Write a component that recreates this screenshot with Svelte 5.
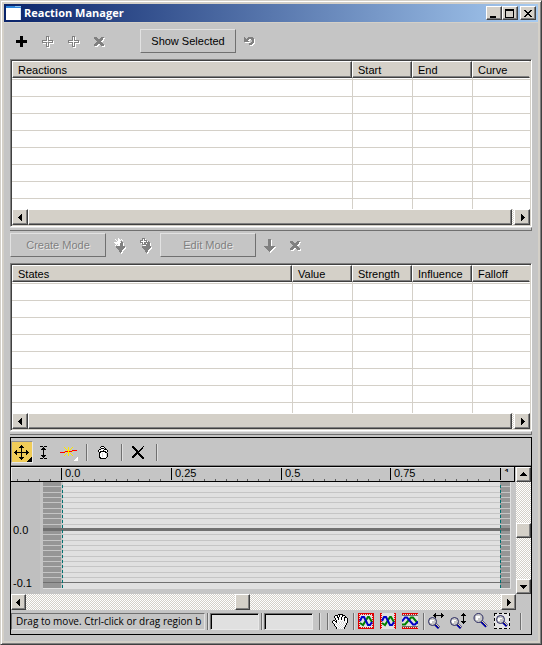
<script>
  const palette = { k: '#000', g: '#808080', w: '#fff', l: '#d8d8d8' };

  const plus = ['....kkk....', '....kkk....', '....kkk....', '....kkk....', 'kkkkkkkkkkk', 'kkkkkkkkkkk', 'kkkkkkkkkkk', '....kkk....', '....kkk....', '....kkk....', '....kkk....'];
  const plusOutline = ['....ggg....', '....g.g....', '....g.g....', '....g.g....', 'ggggg.ggggg', 'g.........g', 'ggggg.ggggg', '....g.g....', '....g.g....', '....g.g....', '....ggg....'];
  const plusFilled = plusOutline.map((row, i) =>
    i > 0 && i < 10 ? row.replace('g.g', 'gwg').replace('g.........g', 'gwwwwwwwwwg') : row
  );
  const cross = ['ggg....ggg', 'gggg..ggg.', '.gggggggg.', '..gggggg..', '...gggg...', '..gggggg..', '.gggggggg.', 'gggg..gggg', 'ggg....ggg'];
  const undo = ['g...ggggg.', 'gg.ggggggg', 'ggggg..ggg', 'gggg....gg', 'ggggg...gg', '.......ggg', '.....gggg.', '.....ggg..'];
  const down = ['....ggg....', '....ggg....', '....ggg....', '....ggg....', '....ggg....', '....ggg....', '....ggg....', 'ggggggggggg', '.ggggggggg.', '..ggggggg..', '...ggggg...', '....ggg....', '.....g.....'];
  const downStar = ['....w......', '.w..w..w...', '..w.w.w....', '...www.g...', 'wwwwwwwgg..', '...wwwggg..', '..w.w.ggg..', '.w..w.ggg..', '..ggggggggg', '..ggggggggg', '...ggggggg.', '....ggggg..', '.....ggg...', '.....ggg...', '......g....'];
  const downPlus = ['..ggg......', '..gwg......', 'gggwggg....', 'gwwwwwg.g..', 'gggwgggggg.', '..gwggwggg.', '..gggggggg.', '......gggg.', '..ggggggggg', '..ggggggggg', '...ggggggg.', '....ggggg..', '.....ggg...', '.....ggg...', '......g....'];
  const trash = ['...kkk....', '..kwwwk...', '...kkk.k..', '.kkwwwkkk.', 'kwwwwkwwwk', 'kwkkkkkkwk', '.kkwwwwkk.', '.kwwlwwwlk', '.kwwlwwwlk', '.kwwlwwwlk', '.kwwlwwwlk', '.kkwwwwwk.', '..kkkkkk..'];
  const bigCross = ['kk.........k.', 'kkk.......k..', '.kkk.....kk..', '..kkk...kk...', '...kkk.kk....', '....kkkk.....', '....kkk......', '...kkkkk.....', '..kkk.kkk....', '.kkk...kkk...', 'kkk.....kkk..', 'kk.......kkk.', '..........kk.'];
  const hand = ['......kkkkk.....', '...kkkwkwwkkk...', '..kwwkwkwwkwwk..', '..kwwkkwwkwwkkk.', '...kwwkwwkwwkwwk', '...kwwkwwkwwkwwk', '.kkwkwwwwwwwkwwk', 'kwwkkwlwlwlwlwwk', 'kwwwkwwlwlwlwlwk', '.kwlwlwlwlwlwlk.', '..kwlwlwlwlwlwk.', '..kwwlwlwlwlwk..', '...kwwlwlwlwlk..', '....kwwlwlwlk...', '....kwlwlwlwk...'];
  const ibeam = ['kkk.kkk', '...k...', '..kkk..', '.kkkkk.', '...k...', '...k...', '...k...', '...k...', '...k...', '.kkkkk.', '..kkk..', '...k...', 'kkk.kkk'];

  const reactionCols = ['Reactions', 'Start', 'End', 'Curve'];
  const stateCols = ['States', 'Value', 'Strength', 'Influence', 'Falloff'];

  const majors = [
    { x: 50, label: '0.0' },
    { x: 160, label: '0.25' },
    { x: 270, label: '0.5' },
    { x: 379, label: '0.75' },
    { x: 489, label: '1' }
  ];
  const minors = Array.from({ length: 44 }, (_, i) => i - 4)
    .filter((k) => k % 10 !== 0 && k < 40)
    .map((k) => Math.round(50 + 10.97 * k));
  const lines = Array.from({ length: 19 }, (_, i) => i - 8)
    .filter((k) => k !== 0)
    .map((k) => ({ y: Math.round(47 + 5.33 * k), dark: k === 10 }));
</script>

{#snippet pix(rows, emboss = false)}
  <svg class:emboss width={rows[0].length} height={rows.length} shape-rendering="crispEdges" aria-hidden="true">
    {#each rows as row, y}
      {#each row as c, x}
        {#if c !== '.'}<rect {x} {y} width="1" height="1" fill={palette[c]} />{/if}
      {/each}
    {/each}
  </svg>
{/snippet}

{#snippet arrow(dir)}
  <svg width="7" height="7" shape-rendering="crispEdges" aria-hidden="true">
    {#if dir === 'left'}<path d="M5 0v7h-1v-1h-1v-1h-1v-1h-1v-1h1v-1h1v-1h1v-1z" />
    {:else if dir === 'right'}<path d="M2 0v7h1v-1h1v-1h1v-1h1v-1h-1v-1h-1v-1h-1v-1z" />
    {:else if dir === 'up'}<path d="M0 5h7v-1h-1v-1h-1v-1h-1v-1h-1v1h-1v1h-1v1h-1z" />
    {:else}<path d="M0 2h7v1h-1v1h-1v1h-1v1h-1v-1h-1v-1h-1v-1h-1z" />{/if}
  </svg>
{/snippet}

{#snippet list(cols, label)}
  <section class="list" aria-label={label}>
    <div class="rows">
      <table>
        <colgroup>
          {#each cols as _, i}<col class:mid={i > 0 && i < cols.length - 1} class:last={i === cols.length - 1} />{/each}
        </colgroup>
        <thead><tr>{#each cols as c}<th scope="col">{c}</th>{/each}</tr></thead>
        <tbody>
          <tr class="lead">{#each cols as _}<td></td>{/each}</tr>
          {#each Array(8) as _}<tr>{#each cols as _}<td></td>{/each}</tr>{/each}
        </tbody>
      </table>
    </div>
    <div class="scroll">
      <button class="raised arrow" aria-label="Scroll left">{@render arrow('left')}</button>
      <div class="raised thumb"></div>
      <div class="stub"></div>
      <button class="raised arrow" aria-label="Scroll right">{@render arrow('right')}</button>
    </div>
  </section>
{/snippet}

{#snippet curves(kind)}
  <svg width="16" height="16" aria-hidden="true">
    <rect width="16" height="16" fill="#e0e0e0" />
    <g shape-rendering="crispEdges" fill="#e00000">
      {#if kind !== 'v'}<path d="M0 0h16v1h-16zM0 15h16v1h-16z" /><path d="M0 1.500h16M0 14.500h16" stroke="#e00000" stroke-dasharray="1 1" />{/if}
      {#if kind === 'h'}<path d="M0 2h16v1h-16zM0 13h16v1h-16z" fill="#707070" />{/if}
      {#if kind !== 'h'}<path d="M0 0h1v16h-1zM15 0h1v16h-1z" /><path d="M1.500 0v16M14.500 0v16" stroke="#e00000" stroke-dasharray="1 1" />{/if}
    </g>
    <g fill="none" stroke-width="2">
      {#if kind === 'h'}
        <path d="M0 11.500h3l6-7h2l5 6" stroke="#008000" />
        <path d="M0 8.500l3-4h2l6 7h2l3-3" stroke="#0000c8" />
      {:else}
        <path d="M2 10l3 2 5-8h1l3 5" stroke="#008000" />
        <path d="M2 8l2-4h2l4 8h2l2-3" stroke="#0000c8" />
      {/if}
    </g>
  </svg>
{/snippet}

{#snippet lens(kind)}
  <svg width="18" height="16" aria-hidden="true">
    {#if kind === 'region'}
      <rect x="1" width="16" height="16" fill="#e4e4e4" />
      <path d="M1 .500h16M1 15.500h16M1.500 0v16M16.500 0v16" stroke="#000" stroke-dasharray="3 2" />
    {/if}
    <g transform={kind === 'plain' ? 'translate(2 0)' : kind === 'region' ? 'translate(3 2)' : 'translate(1 4)'}>
      {#if kind === 'plain'}
        <path d="M8 8l5.500 5.500" stroke="#0000a0" stroke-width="3" />
        <path d="M9 8l5 5" stroke="#f0e080" />
        <circle cx="5.500" cy="5" r="4.500" fill="#c8c8c8" stroke="#282860" />
        <path d="M3 3h4v2h-2v2h-2z" fill="#fff" />
      {:else}
        <path d="M6.500 6.500l4.500 4.500" stroke="#0000a0" stroke-width="3" />
        <path d="M7.500 6.500l4 4" stroke="#f0e080" />
        <circle cx="4.500" cy="4.500" r="4" fill="#c8c8c8" stroke="#282860" />
        <path d="M2 3h4v1h-2v2h-2z" fill="#fff" />
      {/if}
    </g>
    <g shape-rendering="crispEdges">
      {#if kind === 'h'}
        <path d="M6 2h11v1h-11zM8 0h1v5h-1zM7 1h1v3h-1zM14 0h1v5h-1zM15 1h1v3h-1z" />
      {:else if kind === 'v'}
        <path d="M14 0h1v11h-1zM12 2h5v1h-5zM13 1h3v1h-3zM12 8h5v1h-5zM13 9h3v1h-3z" />
      {/if}
    </g>
  </svg>
{/snippet}

<main>
  <header>
    <svg width="16" height="14" shape-rendering="crispEdges" aria-hidden="true">
      <path d="M0 0h15v14h-15z" fill="#fff" /><path d="M0 0h15v2h-15z" fill="#2d86dd" /><path d="M9 0h6v1h-6z" fill="#8dc6f4" /><path d="M14 2h1v12h-1z" fill="#d9e6f4" />
    </svg>
    <h1>Reaction Manager</h1>
    <button class="raised win" aria-label="Minimize"><svg width="10" height="10"><path d="M1 7h6v2h-6z" /></svg></button>
    <button class="raised win" aria-label="Maximize"><svg width="10" height="10" shape-rendering="crispEdges"><path d="M0 0h9v9h-9zM1 2v6h7v-6z" fill-rule="evenodd" /></svg></button>
    <button class="raised win close" aria-label="Close"><svg width="10" height="10" shape-rendering="crispEdges"><path d="M1 1h2v1h1v1h2v-1h1v-1h2v1h-1v1h-1v1h-1v1h1v1h1v1h1v1h-2v-1h-1v-1h-2v1h-1v1h-2v-1h1v-1h1v-1h1v-1h-1v-1h-1v-1h-1z" /></svg></button>
  </header>

  <div class="client">
    <div class="bar top">
      <button class="tool" aria-label="Add master">{@render pix(plus)}</button>
      <button class="tool" aria-label="Add slaves" disabled>{@render pix(plusOutline, true)}</button>
      <button class="tool" aria-label="Add selected" disabled>{@render pix(plusFilled, true)}</button>
      <button class="tool" aria-label="Delete reaction" disabled>{@render pix(cross, true)}</button>
      <button class="text show">Show Selected</button>
      <button class="tool" aria-label="Refresh" disabled>{@render pix(undo, true)}</button>
    </div>

    {@render list(reactionCols, 'Reactions')}
    <div class="splitter"></div>

    <div class="bar modes">
      <button class="text" disabled>Create Mode</button>
      <button class="tool" aria-label="New state" disabled>{@render pix(downStar, true)}</button>
      <button class="tool" aria-label="Append state" disabled>{@render pix(downPlus, true)}</button>
      <button class="text" disabled>Edit Mode</button>
      <button class="tool" aria-label="Set state" disabled>{@render pix(down, true)}</button>
      <button class="tool" aria-label="Delete state" disabled>{@render pix(cross, true)}</button>
    </div>

    {@render list(stateCols, 'States')}
    <div class="splitter"></div>

    <section class="panel" aria-label="Curve editor">
      <div class="curvebar">
        <button class="tool active" aria-label="Move points">
          <svg width="20" height="20" shape-rendering="crispEdges">
            <path d="M9 3h1v15h-1zM2 10h15v1h-15zM8 4h3v1h-3zM7 5h5v1h-5zM8 16h3v1h-3zM7 15h5v1h-5zM3 9h1v3h-1zM4 8h1v5h-1zM15 9h1v3h-1zM14 8h1v5h-1zM20 15v5h-5v-1h1v-1h1v-1h1v-1h1v-1z" />
          </svg>
        </button>
        <button class="tool scale" aria-label="Scale points">{@render pix(ibeam)}</button>
        <button class="tool spark" aria-label="Insert point">
          <svg width="19" height="16" shape-rendering="crispEdges">
            <path d="M4 1h1v1h1v1h1v1h1v-3h1v3h1v-1h1v-1h1v-1h1v1h-1v1h-1v1h-1v1h3v1h-3v1h1v1h1v1h1v1h-1v-1h-1v-1h-1v-1h-1v3h-1v-3h-1v1h-1v1h-1v1h-1v-1h1v-1h1v-1h1v-1h-3v-1h3v-1h-1v-1h-1v-1h-1z" fill="#ffe800" />
            <path d="M0 6h5v-1h3v1h-3v1h-5zM9 5h3v-1h5v1h-5v1h-3z" fill="#f00" />
            <path d="M18 11v4h-4v-1h1v-1h1v-1h1v-1z" fill="#fff" />
          </svg>
        </button>
        <i class="sep"></i>
        <button class="tool" aria-label="Clear">{@render pix(trash)}</button>
        <i class="sep"></i>
        <button class="tool" aria-label="Delete points">{@render pix(bigCross)}</button>
        <i class="sep"></i>
      </div>

      <div class="view">
        <div class="plane">
          <div class="ruler">
            {#each minors as x}<i class="minor" style="left:{x}px"></i>{/each}
            {#each majors as m}<span class="major" style="left:{m.x}px"><b>{m.label}</b></span>{/each}
          </div>
          <div class="graph">
            <div class="axis"><span>0.0</span><span>-0.1</span></div>
            <svg class="plot" height="107" viewBox="0 0 468 107" preserveAspectRatio="none" shape-rendering="crispEdges" aria-label="Curve graph">
              <rect width="468" height="107" fill="#e0e0e0" />
              <rect width="18" height="106" fill="#969696" /><rect x="18" width="2" height="106" fill="#c5c5c5" />
              <rect x="457" width="10" height="106" fill="#969696" />
              {#each lines as l}<rect y={l.y} width="467" height="1" fill={l.dark ? '#707070' : '#c5c5c5'} />{/each}
              <rect y="46" width="467" height="3" fill="#707070" />
              <path d="M19.500 3v103M457.500 3v103" stroke="#007070" stroke-dasharray="3 2" />
            </svg>
          </div>
        </div>
        <div class="vscroll dither">
          <button class="raised arrow" aria-label="Scroll up">{@render arrow('up')}</button>
          <div class="track"></div>
          <div class="raised knob"></div>
          <div class="track"></div>
          <button class="raised arrow" aria-label="Scroll down">{@render arrow('down')}</button>
        </div>
      </div>

      <div class="hrow">
        <div class="hscroll dither">
          <button class="raised arrow" aria-label="Scroll left">{@render arrow('left')}</button>
          <div class="before"></div>
          <div class="raised knob"></div>
          <div class="after"></div>
          <button class="raised arrow" aria-label="Scroll right">{@render arrow('right')}</button>
        </div>
      </div>

      <div class="status">
        <span class="hint">Drag to move. Ctrl-click or drag region b</span>
        <i class="sep"></i>
        <input aria-label="Horizontal value" />
        <i class="sep"></i>
        <input aria-label="Vertical value" />
        <i class="sep first"></i>
        <i class="sep second"></i>
        <button class="tool" aria-label="Pan">{@render pix(hand)}</button>
        <i class="sep"></i>
        <button class="tool" aria-label="Zoom extents">{@render curves('all')}</button>
        <button class="tool" aria-label="Zoom horizontal extents">{@render curves('v')}</button>
        <button class="tool" aria-label="Zoom value extents">{@render curves('h')}</button>
        <i class="sep"></i>
        <button class="tool" aria-label="Zoom horizontally">{@render lens('h')}</button>
        <button class="tool" aria-label="Zoom vertically">{@render lens('v')}</button>
        <button class="tool" aria-label="Zoom">{@render lens('plain')}</button>
        <button class="tool" aria-label="Zoom region">{@render lens('region')}</button>
        <i class="sep end"></i>
      </div>
    </section>
  </div>
</main>

<style>
  :global(body) { margin: 0; background: #d4d0c8; }
  * { box-sizing: border-box; }
  main {
    border: 1px solid;
    border-color: #d4d0c8 #404040 #404040 #d4d0c8;
    box-shadow: inset 1px 1px #fff, inset -1px -1px #808080;
    background: #d4d0c8;
    padding: 3px;
    font: 11px/14px "Liberation Sans", Arial, sans-serif;
    color: #000;
  }
  svg { display: block; flex: none; }
  button { font: inherit; color: inherit; padding: 0; margin: 0; border: 0; background: none; flex: none; }
  .raised {
    background: #d4d0c8;
    border: 1px solid;
    border-color: #fff #404040 #404040 #fff;
    box-shadow: inset -1px -1px #808080;
  }
  header {
    display: flex;
    align-items: center;
    height: 18px;
    padding: 0 2px;
    background: linear-gradient(90deg, #0a246a, #a6caf0);
  }
  h1 { flex: 1; margin: 0 0 0 2px; font: bold 11px/16px "Open Sans", "Noto Sans", sans-serif; color: #fff; }
  .win { width: 16px; height: 14px; padding: 1px 0 0 2px; }
  .close { margin-left: 2px; }
  .client { margin-top: 1px; padding: 0 6px 6px; background: #c5c5c5; }

  .bar { display: flex; align-items: center; }
  .top { height: 36px; }
  .modes { height: 32px; padding-bottom: 4px; }
  .tool { display: flex; align-items: center; justify-content: center; width: 26px; height: 24px; }
  .top .tool { padding-right: 4px; }
  .modes .tool { padding-right: 2px; }
  .emboss { filter: drop-shadow(1px 1px 0 #fff); overflow: visible; }
  .text {
    width: 96px;
    height: 24px;
    border: 1px solid;
    border-color: #e2e2e2 #707070 #707070 #e2e2e2;
  }
  .text:disabled { color: #808080; text-shadow: 1px 1px #e8e8e8; }
  .modes .text + .tool { margin-left: 1px; }
  .modes .tool + .text { margin-left: 1px; }
  .show { margin: 0 2px 0 26px; }

  .list {
    border: 1px solid;
    border-color: #808080 #fff #fff #808080;
    box-shadow: inset 1px 1px #404040, inset -1px -1px #d4d0c8;
    padding: 1px;
    background: #fff;
  }
  .rows { height: 148px; overflow: hidden; }
  table { width: 100%; table-layout: fixed; border-collapse: separate; border-spacing: 0; background: #fff; }
  .mid { width: 60px; }
  .last { width: 58px; }
  th {
    height: 17px;
    padding: 1px 0 0 5px;
    text-align: left;
    font-weight: normal;
    line-height: 13px;
    background: #d4d0c8;
    border: 1px solid;
    border-color: #fff #404040 #404040 #fff;
    box-shadow: inset -1px -1px #808080;
  }
  th:last-child { border-right-color: #d4d0c8; box-shadow: inset 0 -1px #808080; }
  td { height: 17px; padding: 0; border-bottom: 1px solid #d4d0c8; border-left: 1px solid #d4d0c8; }
  td:first-child { border-left: 0; }
  .lead td { height: 2px; }
  .scroll { display: flex; height: 16px; }
  .arrow { display: flex; align-items: center; justify-content: center; width: 16px; height: 16px; }
  .thumb { flex: 1; height: 16px; }
  .stub, .dither {
    background: repeating-conic-gradient(#fff 0 25%, #d4d0c8 0 50%) 0 0 / 2px 2px;
  }
  .stub { width: 2px; }
  .splitter { height: 4px; border-top: 1px solid #e2e2e2; border-bottom: 1px solid #707070; border-right: 1px solid #707070; }

  .panel { margin-top: 2px; border: 1px solid #000; }
  .curvebar {
    display: flex;
    align-items: center;
    height: 29px;
    border-bottom: 1px solid #000;
    box-shadow: inset 0 -1px #808080;
  }
  .curvebar .tool { width: 24px; padding-right: 2px; }
  .curvebar .active {
    width: 22px;
    height: 22px;
    padding: 0;
    background: #f0cc58;
    border: 1px solid;
    border-color: #909090 #e8e8e8 #e8e8e8 #909090;
  }
  .curvebar .scale { padding-right: 3px; }
  .curvebar .spark { padding: 4px 0 0; }
  .curvebar .sep { margin: 0 4px 0 5px; }
  .sep { flex: none; width: 2px; height: 17px; border-left: 1px solid #707070; border-right: 1px solid #dedede; }

  .view { display: flex; }
  .plane { flex: 1; min-width: 0; }
  .ruler {
    position: relative;
    height: 15px;
    margin-right: 1px;
    overflow: hidden;
    border-right: 1px solid #000;
    border-bottom: 1px solid #000;
    box-shadow: inset 1px 1px #e6e6e6;
  }
  .minor { position: absolute; bottom: 0; width: 1px; height: 2px; background: #606060; }
  .major {
    position: absolute;
    top: 1px;
    height: 12px;
    padding-left: 3px;
    border-left: 1px solid #000;
  }
  .major b { display: block; font-weight: normal; line-height: 11px; }
  .major:last-child b { height: 4px; overflow: hidden; }
  .graph { display: flex; height: 112px; }
  .axis { display: flex; flex-direction: column; gap: 39px; width: 32px; padding: 41px 0 0 2px; background: linear-gradient(90deg, #bfbfbf 29px, #c5c5c5 0); }
  .plot { flex: 1; min-width: 0; margin-right: 5px; }
  .vscroll { display: flex; flex-direction: column; width: 15px; }
  .vscroll .arrow, .hscroll .arrow, .knob { width: 15px; height: 15px; flex: none; }
  .track { flex: 1; }
  .hrow { padding-right: 15px; }
  .hscroll { display: flex; height: 16px; }
  .hscroll .arrow, .hscroll .knob { height: 16px; }
  .before { flex: 209; }
  .after { flex: 250; }

  .status { display: flex; align-items: center; height: 24px; padding-bottom: 2px; }
  .hint {
    flex: 1;
    min-width: 0;
    height: 17px;
    padding-left: 4px;
    overflow: hidden;
    white-space: nowrap;
    font: 10px/15px "Open Sans", "Noto Sans", sans-serif;
    border: 1px solid;
    border-color: #707070 #e2e2e2 #e2e2e2 #707070;
  }
  .status .sep { margin-left: 2px; }
  input {
    width: 49px;
    height: 17px;
    margin-left: 1px;
    padding: 0 2px;
    font: inherit;
    border: 1px solid;
    border-color: #707070 #e8e8e8 #e8e8e8 #707070;
    border-radius: 0;
    background: #e0e0e0;
    box-shadow: inset 1px 1px #000;
  }
  .status .first, .status .second { margin-left: 6px; }
  .status .tool { width: 22px; height: 22px; }
  .status .end { margin: 0 9px 0 7px; }
</style>
